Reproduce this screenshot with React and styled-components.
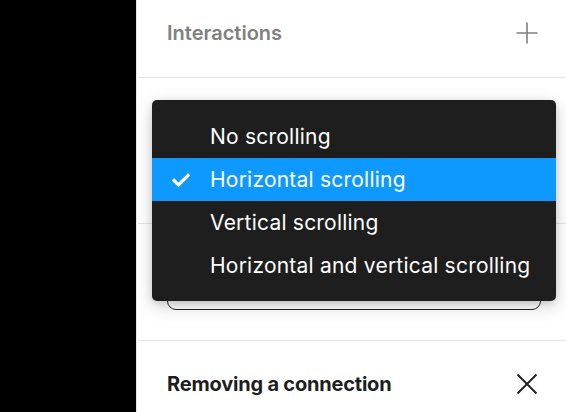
import React from "react";
import styled, { createGlobalStyle } from "styled-components";

const Global = createGlobalStyle`
  html, body { margin: 0; padding: 0; }
  body {
    width: 566px;
    height: 412px;
    overflow: hidden;
    font-family: Inter, "Noto Sans", sans-serif;
    background: #fff;
  }
`;

const Page = styled.div`
  display: flex;
  width: 566px;
  height: 412px;
`;

const Canvas = styled.div`
  width: 136px;
  flex: none;
  background: #000;
`;

const Panel = styled.div`
  position: relative;
  flex: 1;
  display: flex;
  flex-direction: column;
  background: #fff;
  border-left: 1px solid #e6e6e6;
`;

const Section = styled.section`
  display: flex;
  flex-direction: column;
  height: ${(p) => p.$h}px;
  padding: ${(p) => p.$pt || 0}px 29px 0 29px;
  box-sizing: border-box;
  margin-left: 1px;
  border-bottom: ${(p) => (p.$last ? "none" : "1px solid #e5e5e5")};
`;

const HeaderRow = styled.div`
  display: flex;
  align-items: center;
  justify-content: space-between;
  height: ${(p) => p.$h}px;
  flex: none;
`;

const Title = styled.h2`
  margin: 0;
  font-size: 20px;
  font-weight: ${(p) => (p.$muted ? 600 : 700)};
  color: ${(p) => (p.$muted ? "#808080" : "#1e1e1e")};
  letter-spacing: ${(p) => (p.$muted ? "0" : "-0.2px")};
`;

const IconButton = styled.button`
  display: flex;
  align-items: center;
  justify-content: center;
  width: 24px;
  height: 24px;
  padding: 0;
  margin-right: -2px;
  border: none;
  background: none;
  color: ${(p) => p.$color};
`;

const Field = styled.div`
  height: 40px;
  margin-top: ${(p) => p.$top}px;
  margin-right: -4px;
  border: 1.5px solid #222;
  border-radius: 9px;
  box-sizing: border-box;
`;

const Menu = styled.ul`
  position: absolute;
  left: 15px;
  top: 100px;
  width: 404px;
  margin: 0;
  padding: 15px 0 14px;
  list-style: none;
  background: #1e1e1e;
  border-radius: 5px;
  box-shadow: 0 5px 18px rgba(0, 0, 0, 0.18), 0 2px 6px rgba(0, 0, 0, 0.12);
  box-sizing: border-box;
`;

const Item = styled.li`
  display: flex;
  align-items: center;
  height: 43px;
  padding-left: 20px;
  gap: 20px;
  background: ${(p) => (p.$active ? "#0d99ff" : "transparent")};
  color: #fff;
  font-size: 21px;
  font-weight: 400;
  letter-spacing: 0.22px;
`;

const CheckSlot = styled.span`
  display: flex;
  align-items: center;
  justify-content: center;
  width: 18px;
  height: 18px;
  flex: none;
`;

const Plus = () => (
  <svg width="22" height="22" viewBox="0 0 22 22">
    <path d="M11 0.5V21.5M0.5 11H21.5" stroke="currentColor" strokeWidth="1.6" fill="none" />
  </svg>
);

const Close = () => (
  <svg width="22" height="22" viewBox="0 0 22 22">
    <path d="M1.5 1.5L20.5 20.5M20.5 1.5L1.5 20.5" stroke="currentColor" strokeWidth="1.8" fill="none" />
  </svg>
);

const Check = () => (
  <svg width="18" height="14" viewBox="0 0 18 14">
    <path d="M2 7.5L6.5 12L16 2.5" stroke="#fff" strokeWidth="3.2" fill="none" strokeLinecap="square" />
  </svg>
);

const options = [
  "No scrolling",
  "Horizontal scrolling",
  "Vertical scrolling",
  "Horizontal and vertical scrolling",
];

export default function App() {
  return (
    <>
      <Global />
      <Page>
        <Canvas />
        <Panel>
          <Section $h={78}>
            <HeaderRow $h={66}>
              <Title $muted>Interactions</Title>
              <IconButton $color="#808080" aria-label="Add interaction">
                <Plus />
              </IconButton>
            </HeaderRow>
          </Section>
          <Section $h={146} />
          <Section $h={117}>
            <Field $top={46} />
          </Section>
          <Section $h={71} $pt={23} $last>
            <HeaderRow $h={40}>
              <Title>Removing a connection</Title>
              <IconButton $color="#1e1e1e" aria-label="Close">
                <Close />
              </IconButton>
            </HeaderRow>
          </Section>
          <Menu>
            {options.map((o, i) => (
              <Item key={o} $active={i === 1}>
                <CheckSlot>{i === 1 && <Check />}</CheckSlot>
                {o}
              </Item>
            ))}
          </Menu>
        </Panel>
      </Page>
    </>
  );
}
